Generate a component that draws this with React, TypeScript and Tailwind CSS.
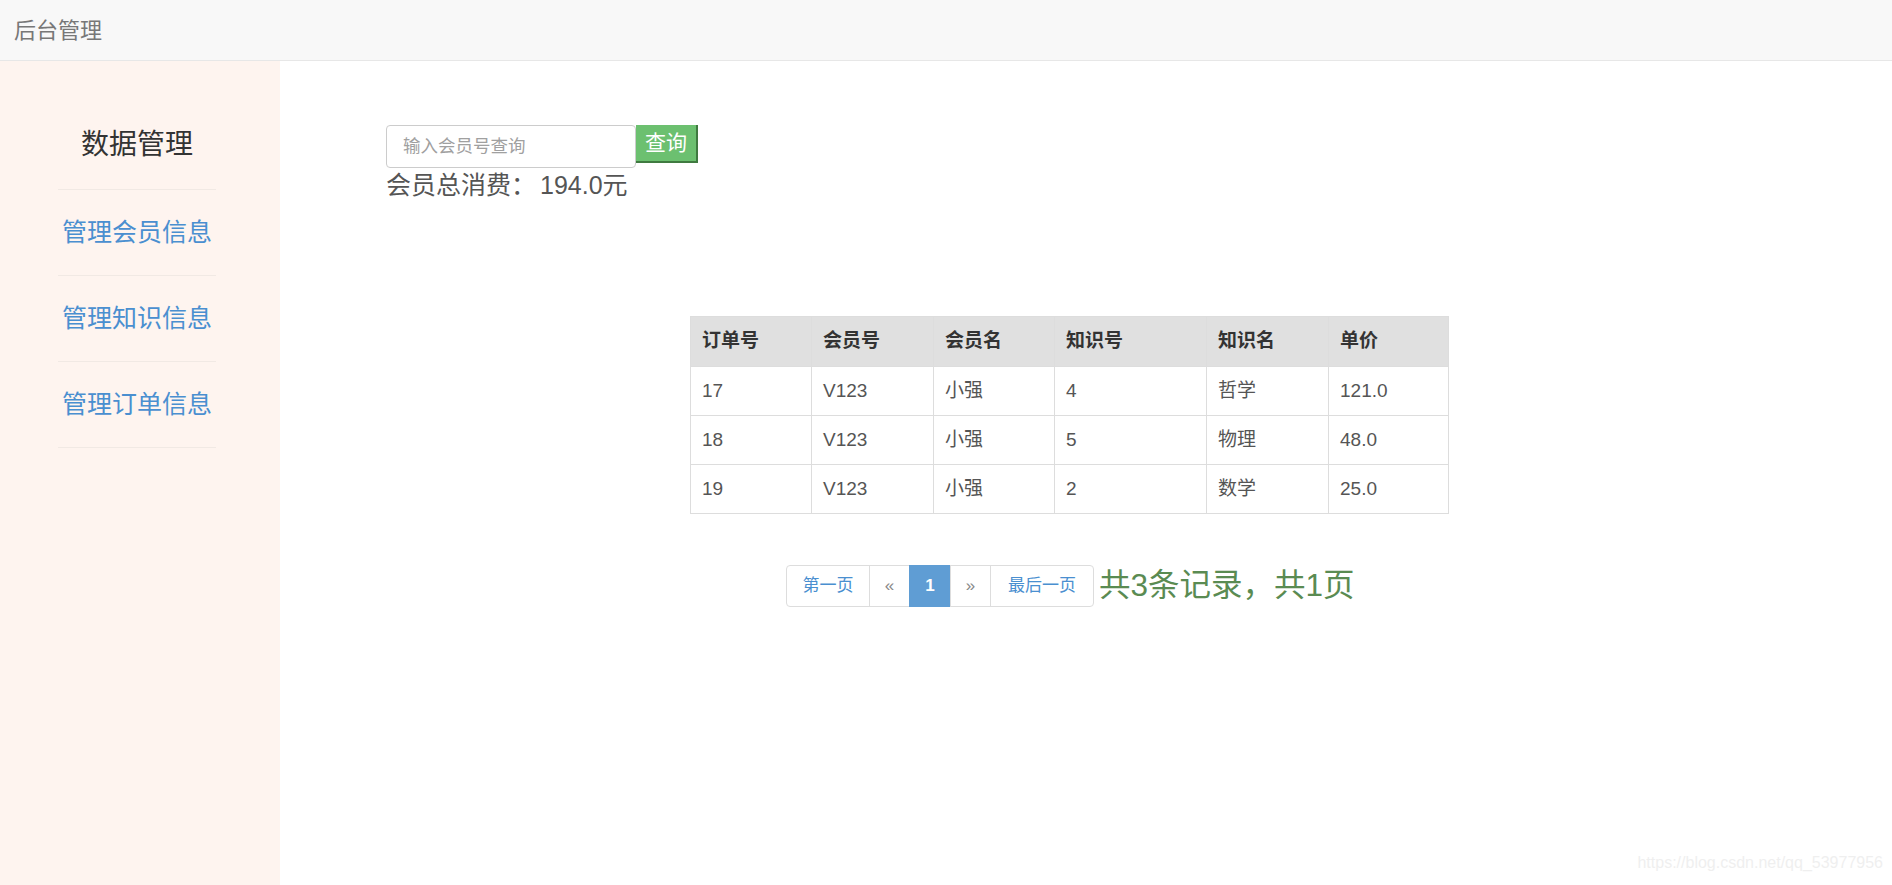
const ROWS = [
  ['17', 'V123', '小强', '4', '哲学', '121.0'],
  ['18', 'V123', '小强', '5', '物理', '48.0'],
  ['19', 'V123', '小强', '2', '数学', '25.0'],
];

const HEAD = ['订单号', '会员号', '会员名', '知识号', '知识名', '单价'];
const WIDTHS = ['w-[121px]', 'w-[122px]', 'w-[121px]', 'w-[152px]', 'w-[122px]', 'w-[120px]'];

const NAV = ['管理会员信息', '管理知识信息', '管理订单信息'];

export default function App() {
  return (
    <div className="flex h-[885px] flex-col overflow-hidden bg-white font-['Liberation_Sans','Noto_Sans_CJK_SC',sans-serif]">
      {/* Top navbar */}
      <header className="flex h-[61px] shrink-0 items-center border-b border-[#e7e7e7] bg-[#f8f8f8] pl-[14px]">
        <span className="text-[22px] text-[#777]">后台管理</span>
      </header>

      <div className="flex flex-1">
        {/* Sidebar */}
        <aside className="w-[280px] shrink-0 bg-[#fef4ef] pl-[58px] pt-[55px]">
          <div className="w-[158px]">
            <div className="flex h-[58px] items-center justify-center text-[28px] text-[#333]">数据管理</div>
            <div className="mt-[15px] border-b border-[#f1e9e4]" />
            {NAV.map(n => (
              <div key={n} className="flex h-[86px] items-center justify-center border-b border-[#f1e9e4] text-[25px] text-[#4a8fd0]">
                {n}
              </div>
            ))}
          </div>
        </aside>

        {/* Main */}
        <main className="relative flex-1 pl-[106px] pt-[64px]">
          <div className="flex">
            <div className="flex h-[43px] w-[250px] items-center rounded-[4px] border border-[#ccc] pl-[16px] text-[17.5px] text-[#a0a0a0]">
              输入会员号查询
            </div>
            <button className="flex h-[38px] w-[62px] items-center justify-center border-r-2 border-b-2 border-[#3f7a40] bg-[#6cc070] text-[21px] text-white">
              查询
            </button>
          </div>
          <div className="mt-[1px] text-[25px] leading-[32px] text-[#555]">会员总消费：<span className="ml-[4px]">194.0元</span></div>

          <table className="ml-[304px] mt-[115px] border-collapse text-[19px]">
            <thead>
              <tr className="h-[50px] bg-[#e0e0e0]">
                {HEAD.map((h, i) => (
                  <th key={h} className={`${WIDTHS[i]} border border-[#ddd] pl-[11px] text-left font-bold text-[#333]`}>{h}</th>
                ))}
              </tr>
            </thead>
            <tbody>
              {ROWS.map(r => (
                <tr key={r[0]} className="h-[49px]">
                  {r.map((c, i) => (
                    <td key={i} className="border border-[#ddd] pl-[11px] text-[#555]">{c}</td>
                  ))}
                </tr>
              ))}
            </tbody>
          </table>

          <div className="ml-[400px] mt-[48px] flex items-center">
            <div className="flex h-[42px] text-[17px]">
              <span className="flex w-[84px] items-center justify-center rounded-l-[4px] border border-[#ddd] text-[#4a8fd0]">第一页</span>
              <span className="-ml-px flex w-[41px] items-center justify-center border border-[#ddd] text-[#888]">«</span>
              <span className="-ml-px flex w-[42px] items-center justify-center border border-[#5f9dd4] bg-[#5f9dd4] font-bold text-white">1</span>
              <span className="-ml-px flex w-[41px] items-center justify-center border border-[#ddd] text-[#888]">»</span>
              <span className="-ml-px flex w-[104px] items-center justify-center rounded-r-[4px] border border-[#ddd] text-[#4a8fd0]">最后一页</span>
            </div>
            <span className="ml-[5px] text-[31.5px] text-[#5a8b52]">共3条记录，共1页</span>
          </div>

          <span className="absolute bottom-[10px] right-[9px] text-[16px] text-[#efefef]">https://blog.csdn.net/qq_53977956</span>
        </main>
      </div>
    </div>
  );
}
